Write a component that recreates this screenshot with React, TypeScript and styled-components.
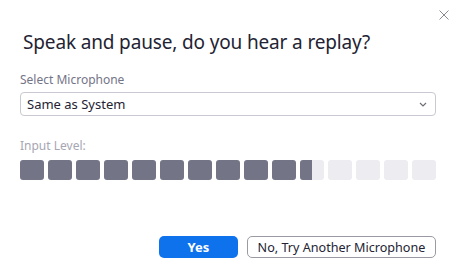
import React from "react";
import styled, { createGlobalStyle } from "styled-components";

const GlobalStyle = createGlobalStyle`
  html, body {
    margin: 0;
    padding: 0;
    background: #ffffff;
  }
  body {
    font-family: "Noto Sans", "Open Sans", sans-serif;
    color: #232333;
  }
`;

const TOTAL_BARS = 15;
const LEVEL = 10.5;

const App = () => {
  return (
    <>
      <GlobalStyle />
      <Dialog>
        <TopBar>
          <CloseBtn aria-label="Close">
            <svg width="10" height="10" viewBox="0 0 10 10">
              <path d="M0.5 0.5 L9.5 9.5 M9.5 0.5 L0.5 9.5" stroke="#8a8a94" strokeWidth="1" fill="none" />
            </svg>
          </CloseBtn>
        </TopBar>
        <Title>Speak and pause, do you hear a replay?</Title>
        <Label>Select Microphone</Label>
        <Select>
          <span>Same as System</span>
          <svg width="8" height="5" viewBox="0 0 8 5">
            <path d="M1 1 L4 4 L7 1" stroke="#6e6e78" strokeWidth="1.2" fill="none" />
          </svg>
        </Select>
        <LevelLabel>Input Level:</LevelLabel>
        <Meter>
          {Array.from({ length: TOTAL_BARS }).map((_, i) => {
            const fill = Math.max(0, Math.min(1, LEVEL - i));
            return (
              <Bar key={i}>
                <BarFill style={{ width: `${fill * 100}%` }} />
              </Bar>
            );
          })}
        </Meter>
        <Actions>
          <PrimaryBtn>Yes</PrimaryBtn>
          <SecondaryBtn>No, Try Another Microphone</SecondaryBtn>
        </Actions>
      </Dialog>
    </>
  );
};

const Dialog = styled.div`
  width: 456px;
  height: 280px;
  box-sizing: border-box;
  padding: 0 20px;
  display: flex;
  flex-direction: column;
`;

const TopBar = styled.div`
  display: flex;
  justify-content: flex-end;
  height: 28px;
  margin-right: -13px;
  padding-top: 10px;
  box-sizing: border-box;
`;

const CloseBtn = styled.button`
  width: 10px;
  height: 10px;
  padding: 0;
  border: none;
  background: none;
  display: flex;
  cursor: pointer;
`;

const Title = styled.h2`
  margin: 0 0 0 3px;
  font-size: 19px;
  font-weight: 400;
  letter-spacing: -0.15px;
  line-height: 28px;
  color: #232333;
`;

const Label = styled.div`
  margin-top: 16px;
  font-size: 12px;
  line-height: 16px;
  color: #747487;
`;

const Select = styled.div`
  margin-top: 4px;
  height: 24px;
  box-sizing: border-box;
  border: 1px solid #c9c9d1;
  border-radius: 4px;
  padding: 0 8px 0 6px;
  display: flex;
  align-items: center;
  justify-content: space-between;
  font-size: 13px;
  color: #232333;
`;

const LevelLabel = styled(Label)`
  margin-top: 22px;
  color: #a6a6b3;
`;

const Meter = styled.div`
  margin-top: 6px;
  display: grid;
  grid-template-columns: repeat(${TOTAL_BARS}, 24px);
  gap: 4px;
`;

const Bar = styled.div`
  height: 20px;
  border-radius: 3px;
  background: #ededf1;
  overflow: hidden;
`;

const BarFill = styled.div`
  height: 100%;
  background: #747487;
`;

const Actions = styled.div`
  margin-top: 56px;
  display: flex;
  justify-content: flex-end;
  gap: 9px;
`;

const PrimaryBtn = styled.button`
  width: 79px;
  height: 22px;
  border: none;
  border-radius: 5px;
  background: #0e72ed;
  color: #ffffff;
  font-family: inherit;
  font-size: 13px;
  font-weight: 700;
  padding: 0;
  cursor: pointer;
`;

const SecondaryBtn = styled.button`
  width: 189px;
  height: 22px;
  box-sizing: border-box;
  border: 1px solid #9a9aa3;
  border-radius: 5px;
  background: #ffffff;
  color: #232333;
  font-family: inherit;
  font-size: 12.6px;
  padding: 0;
  cursor: pointer;
`;

export default App;
